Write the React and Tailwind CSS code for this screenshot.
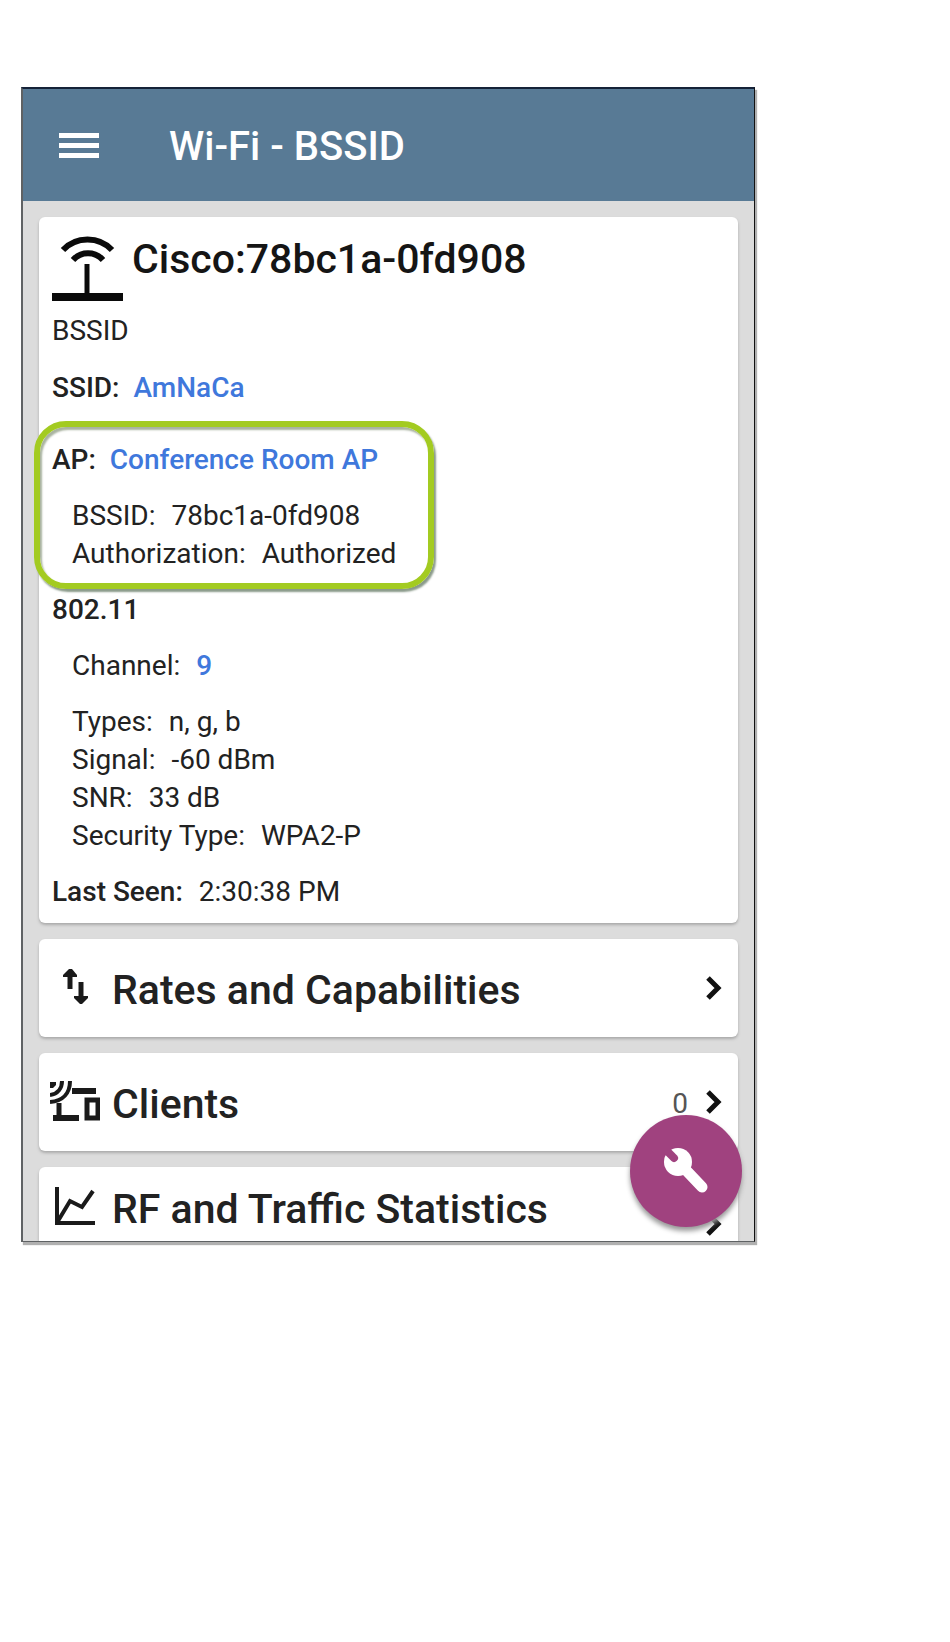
const details = [
    { label: 'Types:', value: 'n, g, b' },
    { label: 'Signal:', value: '-60 dBm' },
    { label: 'SNR:', value: '33 dB' },
    { label: 'Security Type:', value: 'WPA2-P' },
];

function AccessPointIcon() {
    return (
        <svg viewBox="0 0 72 66" className="w-[72px] h-[66px] shrink-0" fill="none" stroke="#0a0a0a">
            <path d="M11 15C24 1 47 1 60 15" strokeWidth="6" />
            <path d="M21 25C29 16 43 16 51 25" strokeWidth="6" />
            <path d="M35 29V60" strokeWidth="5" />
            <path d="M0 62H71" strokeWidth="8" />
        </svg>
    );
}

function RatesIcon() {
    return (
        <svg viewBox="0 0 50 44" className="w-[50px] h-11 shrink-0" fill="none" stroke="#1a1a1a" strokeWidth="5">
            <path d="M20 23V8" />
            <path d="M31 16V32" />
            <path d="M13 11V9L19 3H22L27 9V11Z" fill="#1a1a1a" stroke="none" />
            <path d="M24 30V32L30 38H32L38 32V30Z" fill="#1a1a1a" stroke="none" />
        </svg>
    );
}

function ClientsIcon() {
    return (
        <svg viewBox="0 0 50 44" className="w-[50px] h-11 shrink-0" fill="none" stroke="#1a1a1a" strokeWidth="4">
            <path d="M0 2H6V5L3 8H0Z" fill="#1a1a1a" stroke="none" />
            <path d="M12 1C12 8 8 14 0 15" />
            <path d="M20 1C20 13 13 21 0 22" />
            <path d="M22 11H46" strokeWidth="6" />
            <path d="M9 23V37" strokeWidth="5" />
            <path d="M3 38H29" strokeWidth="6" />
            <path d="M37 20H48V38H37Z" strokeWidth="5" />
        </svg>
    );
}

function StatsIcon() {
    return (
        <svg viewBox="0 0 50 44" className="w-[50px] h-11 shrink-0" fill="none" stroke="#1a1a1a" strokeWidth="4">
            <path d="M7 2V38H45" />
            <path d="M8 36L20 16L32 22L43 6" />
        </svg>
    );
}

function Chevron() {
    return (
        <svg viewBox="0 0 16 26" className="w-4 h-[26px] shrink-0" fill="none" stroke="#111" strokeWidth="5">
            <path d="M2 3L12 13L2 23" />
        </svg>
    );
}

function WrenchIcon() {
    return (
        <svg viewBox="0 0 46 46" className="w-[46px] h-[46px]" fill="none" strokeLinecap="round">
            <circle cx="15" cy="14" r="14" fill="#fff" />
            <path d="M20 19L39 39" stroke="#fff" strokeWidth="11" />
            <path d="M11 10L3 2" stroke="#a0427f" strokeWidth="8" />
        </svg>
    );
}

function Row({ label, value }) {
    return (
        <div className="flex gap-4">
            <dt>{label}</dt>
            <dd>{value}</dd>
        </div>
    );
}

function Link({ children }) {
    return <a href="#" className="font-medium text-[#3f78dc]">{children}</a>;
}

export default function App() {
    return (
        <div className="min-h-screen bg-white pt-[87px] pl-[21px] pr-4 font-[Roboto,'Liberation_Sans',sans-serif] text-[#222]">
            <div className="relative w-full max-w-[734px] overflow-hidden border-2 border-r border-b border-[#5f6264] border-r-[#111] border-t-[#152238] bg-[#dcdcdc] shadow-[2px_3px_1px_#b0b0b0]">
                <header className="flex items-center gap-[70px] h-28 px-9 bg-[#587a95] text-white">
                    <button type="button" aria-label="Open menu" className="flex flex-col gap-[5px] w-10">
                        <span className="w-full h-[5px] bg-white"></span>
                        <span className="w-full h-[5px] bg-white"></span>
                        <span className="w-full h-[5px] bg-white"></span>
                    </button>
                    <h1 className="pt-1 text-[40px] leading-[48px] font-medium">Wi-Fi - BSSID</h1>
                </header>

                <main className="flex flex-col gap-4 pt-4 px-4">
                    <section className="rounded-md bg-white shadow-[0_2px_3px_#aaa] pt-[18px] px-[13px] pb-3 text-[28px] leading-[38px]">
                        <div className="flex items-start gap-2">
                            <AccessPointIcon />
                            <h2 className="text-[41px] leading-[48px] font-medium text-[#151515]">Cisco:78bc1a-0fd908</h2>
                        </div>
                        <p className="mt-[11px]">BSSID</p>
                        <p className="mt-[19px] flex gap-[14px]">
                            <strong className="font-medium">SSID:</strong>
                            <Link>AmNaCa</Link>
                        </p>

                        <div className="relative mt-[34px]">
                            <p className="flex gap-[14px]">
                                <strong className="font-medium">AP:</strong>
                                <Link>Conference Room AP</Link>
                            </p>
                            <dl className="mt-[18px] pl-5">
                                <Row label="BSSID:" value="78bc1a-0fd908" />
                                <Row label="Authorization:" value="Authorized" />
                            </dl>
                            <div className="absolute -top-5 -bottom-4 -left-[18px] w-[400px] rounded-[32px] border-[6px] border-[#a3cb21] shadow-[2px_3px_2px_#8a9a8a,inset_2px_3px_2px_#a9b3a0] pointer-events-none"></div>
                        </div>

                        <h3 className="mt-[18px] font-medium">802.11</h3>
                        <dl className="mt-[18px] pl-5">
                            <Row label="Channel:" value={<Link>9</Link>} />
                        </dl>
                        <dl className="mt-[18px] pl-5">
                            {details.map((item) => (
                                <Row key={item.label} label={item.label} value={item.value} />
                            ))}
                        </dl>
                        <p className="mt-[18px] flex gap-4">
                            <strong className="font-medium">Last Seen:</strong>
                            <span>2:30:38 PM</span>
                        </p>
                    </section>

                    <a href="#" className="flex items-center h-[98px] pl-[11px] pr-4 rounded-md bg-white shadow-[0_2px_3px_#aaa]">
                        <RatesIcon />
                        <span className="flex-1 pl-3 pt-1 text-[41px] leading-[48px] font-medium">Rates and Capabilities</span>
                        <Chevron />
                    </a>
                    <a href="#" className="flex items-center h-[98px] pl-[11px] pr-4 rounded-md bg-white shadow-[0_2px_3px_#aaa]">
                        <ClientsIcon />
                        <span className="flex-1 pl-3 pt-1 text-[41px] leading-[48px] font-medium">Clients</span>
                        <span className="pr-[18px] pt-1 text-[28px] leading-[38px] text-[#555]">0</span>
                        <Chevron />
                    </a>
                    <a href="#" className="flex items-start pt-[18px] pb-1 pl-[11px] pr-4 rounded-t-md bg-white shadow-[0_2px_3px_#aaa]">
                        <StatsIcon />
                        <span className="flex-1 pl-3 pb-1 text-[41px] leading-[48px] font-medium">RF and Traffic Statistics</span>
                        <span className="self-end">
                            <Chevron />
                        </span>
                    </a>
                </main>

                <button
                    type="button"
                    aria-label="Tools"
                    className="absolute right-3 bottom-[14px] flex items-center justify-center w-28 h-28 rounded-full bg-[#a0427f] shadow-[0_4px_5px_#999]"
                >
                    <WrenchIcon />
                </button>
            </div>
        </div>
    );
}
